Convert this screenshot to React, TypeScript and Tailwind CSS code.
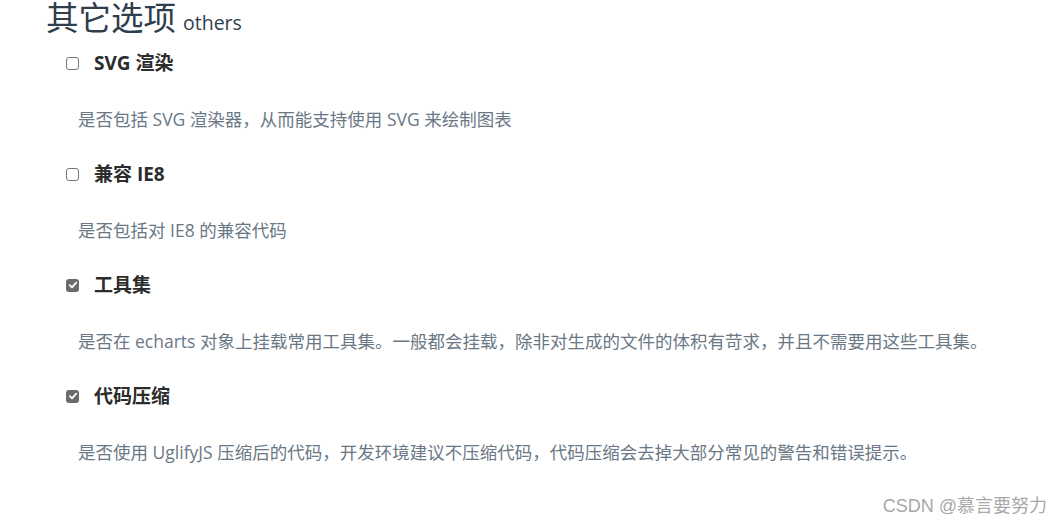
import React from 'react';

type Option = { title: string; desc: string; checked: boolean };

const options: Option[] = [
  { title: 'SVG 渲染', desc: '是否包括 SVG 渲染器，从而能支持使用 SVG 来绘制图表', checked: false },
  { title: '兼容 IE8', desc: '是否包括对 IE8 的兼容代码', checked: false },
  {
    title: '工具集',
    desc: '是否在 echarts 对象上挂载常用工具集。一般都会挂载，除非对生成的文件的体积有苛求，并且不需要用这些工具集。',
    checked: true,
  },
  {
    title: '代码压缩',
    desc: '是否使用 UglifyJS 压缩后的代码，开发环境建议不压缩代码，代码压缩会去掉大部分常见的警告和错误提示。',
    checked: true,
  },
];

function Box({ checked }: { checked: boolean }) {
  if (!checked) {
    return <span className="block w-[13px] h-[13px] rounded-[3px] border border-[#767676] bg-white" />;
  }
  return (
    <span className="flex items-center justify-center w-[13px] h-[13px] rounded-[3px] bg-[#6b6b6b]">
      <svg width="10" height="10" viewBox="0 0 10 10">
        <path d="M1.8 5.2 L4 7.3 L8.2 2.6" fill="none" stroke="white" strokeWidth="1.8" strokeLinecap="round" strokeLinejoin="round" />
      </svg>
    </span>
  );
}

export default function App() {
  return (
    <div
      className="relative w-[1060px] h-[526px] bg-white overflow-hidden"
      style={{ fontFamily: '"Open Sans", "Noto Sans CJK SC", sans-serif' }}
    >
      <div className="pl-[46px]">
        {/* Heading */}
        <h2 className="leading-[36px] text-[#2f3d4c] whitespace-nowrap">
          <span className="text-[32.5px]">其它选项</span>
          <span className="ml-[7px] text-[19.5px]">others</span>
        </h2>

        {/* Options */}
        <div className="pl-[20px] pt-[6px] flex flex-col gap-[28px]">
          {options.map((o) => (
            <div key={o.title} className="flex flex-col gap-[29px]">
              <label className="flex items-center h-[30px]">
                <Box checked={o.checked} />
                <span className="ml-[15px] text-[19px] font-bold text-[#2c2c2c]">{o.title}</span>
              </label>
              <p className="pl-[12px] h-[24px] text-[17.5px] leading-[24px] text-[#6a7886] whitespace-nowrap">
                {o.desc}
              </p>
            </div>
          ))}
        </div>
      </div>

      {/* Watermark */}
      <div
        className="absolute right-[13px] bottom-[6px] text-[18px] text-[#a8a8a8]"
        style={{ fontFamily: '"Liberation Sans", "Noto Sans CJK SC", sans-serif' }}
      >
        CSDN @慕言要努力
      </div>
    </div>
  );
}
